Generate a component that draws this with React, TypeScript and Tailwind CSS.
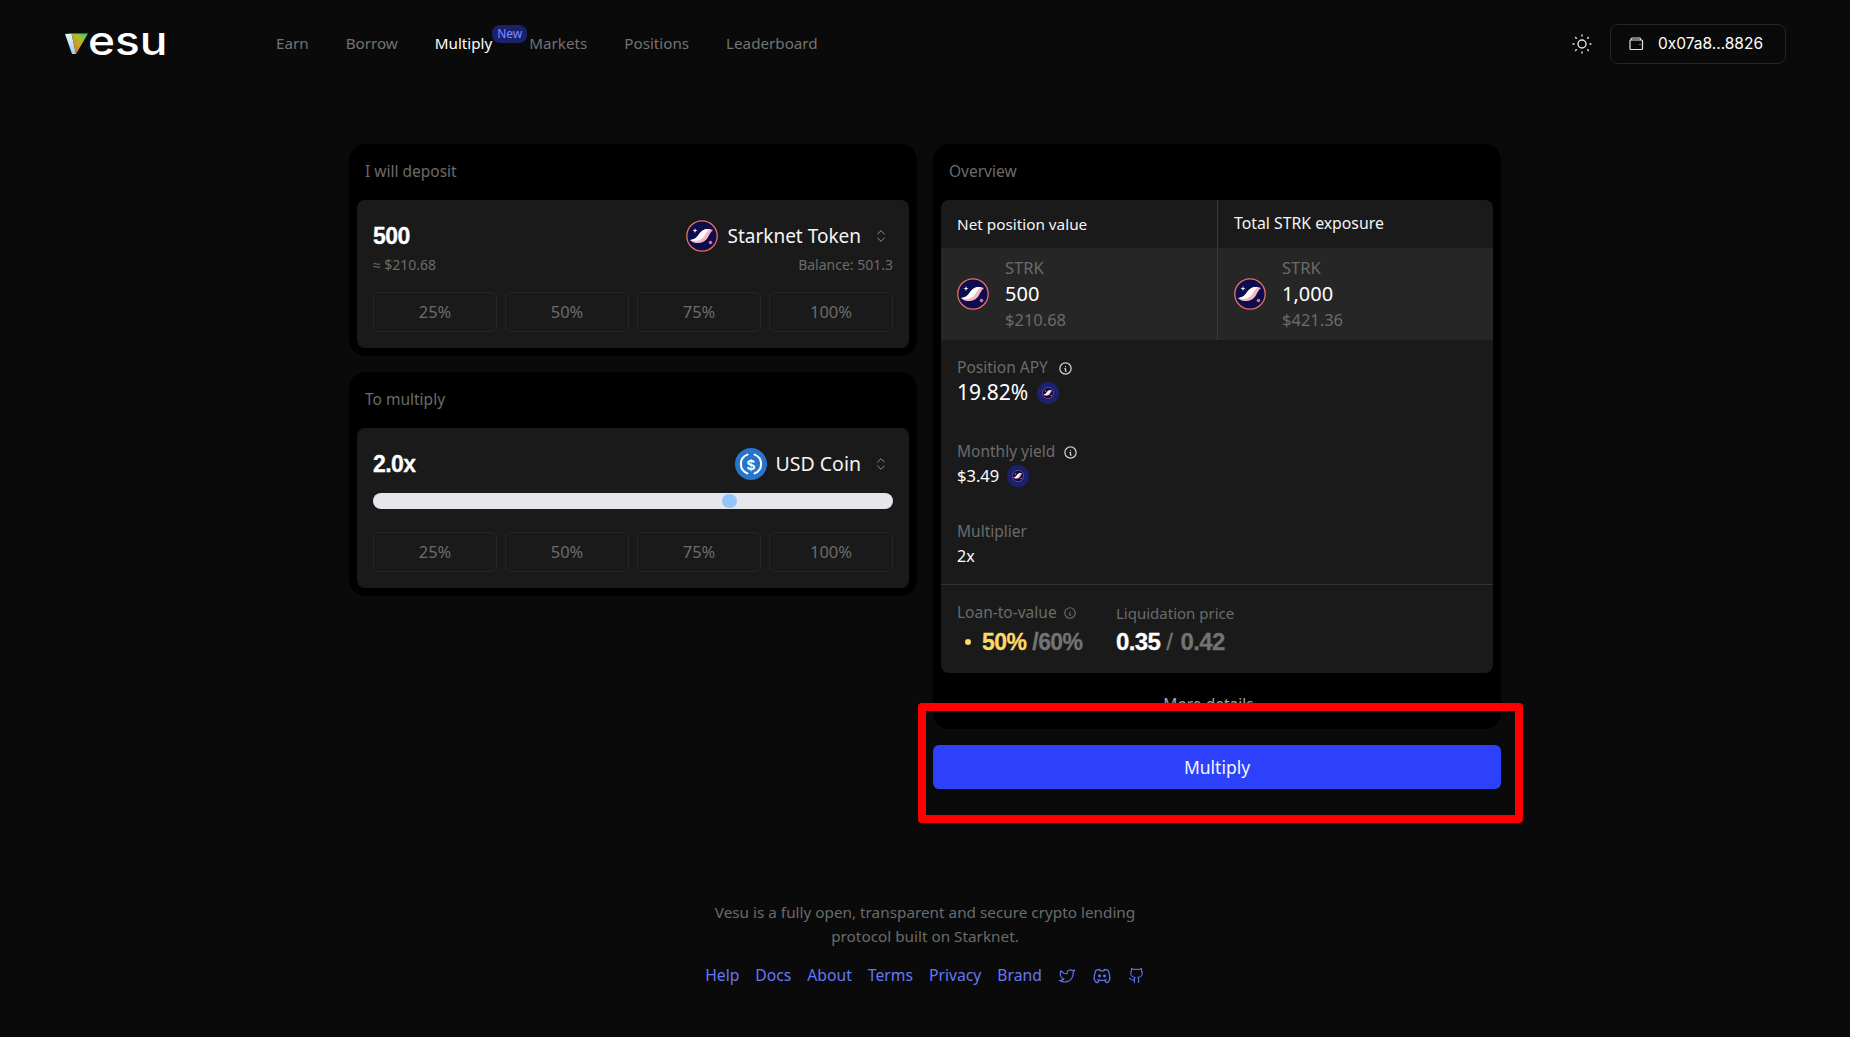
import { ChevronsUpDown, Github } from "lucide-react"
import { TbBrandDiscord, TbBrandTwitter, TbInfoCircle, TbSun } from "react-icons/tb"

const navLinks = ["Earn", "Borrow", "Multiply", "Markets", "Positions", "Leaderboard"]
const footerLinks = ["Help", "Docs", "About", "Terms", "Privacy", "Brand"]
const percents = ["25%", "50%", "75%", "100%"]

const VesuLogo = () => (
    <div className="flex items-center h-10 w-[100px]">
        <svg width="24" height="22" viewBox="0 0 24 22" className="shrink-0">
            <defs>
                <linearGradient id="vesuMain" x1="1" y1="0" x2="0.3" y2="1">
                    <stop offset="0" stopColor="#2fc77a" />
                    <stop offset="0.4" stopColor="#a8c02c" />
                    <stop offset="1" stopColor="#f2761a" />
                </linearGradient>
                <linearGradient id="vesuSide" x1="0" y1="0" x2="0" y2="1">
                    <stop offset="0" stopColor="#e8f6fb" />
                    <stop offset="1" stopColor="#8fd4ee" />
                </linearGradient>
            </defs>
            <path d="M0 1 L6.5 0.5 L11 21 L7 21 Z" fill="url(#vesuSide)" />
            <path d="M6.5 0.5 L23 0.5 L11 21 Z" fill="url(#vesuMain)" />
        </svg>
        <span className="origin-left scale-x-[1.18] font-['Inter',sans-serif] text-[39px] leading-none font-medium text-white -ml-[1px] -mt-[7px]">esu</span>
    </div>
)

const StarknetIcon = ({ size = 32 }: { size?: number }) => (
    <svg width={size} height={size} viewBox="0 0 32 32" className="shrink-0">
        <circle cx="16" cy="16" r="15.2" fill="#0c0c4f" stroke="#e5715f" strokeWidth="1.3" />
        <path d="M4 20 C9 19.5 11 17 13.5 13.5 C16.5 9.5 21 7.5 27 10 C24.5 12 23.5 14.5 21.5 18 C18.5 23 9.5 25.5 4 20 Z" fill="#f7b6c2" />
        <path d="M4 20 C9 19.5 11 17 13.5 13.5 C16.5 9.5 20 8 24.5 9.5 C21 10.5 20 13.5 18 16.5 C15.5 20.5 9 22.5 4 20 Z" fill="#ffffff" />
        <circle cx="24.5" cy="22.5" r="1.8" fill="#ec6f7e" />
        <path d="M9 8 L9.6 10 L11.5 10.6 L9.6 11.2 L9 13 L8.4 11.2 L6.5 10.6 L8.4 10 Z" fill="#ffffff" />
    </svg>
)

const UsdcIcon = () => (
    <svg width="32" height="32" viewBox="0 0 32 32" className="shrink-0">
        <circle cx="16" cy="16" r="16" fill="#2775ca" />
        <path d="M12.5 6.6 A10 10 0 0 0 12.5 25.4" fill="none" stroke="#fff" strokeWidth="2" strokeLinecap="round" />
        <path d="M19.5 6.6 A10 10 0 0 1 19.5 25.4" fill="none" stroke="#fff" strokeWidth="2" strokeLinecap="round" />
        <text x="16" y="21.5" textAnchor="middle" fill="#fff" fontSize="15" fontWeight="700" fontFamily="Liberation Sans, sans-serif">$</text>
    </svg>
)

const WalletIcon = () => (
    <svg width="15" height="14" viewBox="0 0 15 14" fill="none" stroke="#e5e5e5" strokeWidth="1.2">
        <path d="M2 3 L2 2.5 C2 1.6 2.6 1 3.5 1 L11 1 L12 3" />
        <rect x="1" y="3" width="12.5" height="9.5" rx="1" />
        <circle cx="11" cy="7.5" r="0.6" fill="#e5e5e5" stroke="none" />
    </svg>
)

const SmallStrk = () => (
    <span className="flex items-center justify-center w-[22px] h-[22px] rounded-full bg-[#1a2270]">
        <StarknetIcon size={12} />
    </span>
)

const PercentButtons = () => (
    <div className="grid grid-cols-4 gap-2">
        {percents.map((p) => (
            <button key={p} className="h-10 rounded-md border border-[#262626] text-[16.5px] text-[#6b6b6b]">
                {p}
            </button>
        ))}
    </div>
)

const TokenSelect = ({ icon, name, nameClass }: { icon: React.ReactNode; name: string; nameClass: string }) => (
    <div className="flex items-center">
        {icon}
        <span className={`ml-[9px] text-[#f5f5f5] ${nameClass}`}>{name}</span>
        <ChevronsUpDown size={16} strokeWidth={1.3} className="ml-[12px] mr-1 text-[#a3a3a3]" />
    </div>
)

const StatCell = ({ amount, usd, border }: { amount: string; usd: string; border?: boolean }) => (
    <div className={`flex items-center px-4 ${border ? "border-l border-[#3a3a3a]" : ""}`}>
        <StarknetIcon />
        <div className="ml-4 flex flex-col">
            <span className="text-[16.5px] leading-[24px] text-[#6b6b6b]">STRK</span>
            <span className="text-[20px] leading-[28px] text-white">{amount}</span>
            <span className="text-[16.5px] leading-[24px] text-[#6b6b6b]">{usd}</span>
        </div>
    </div>
)

export default function App() {
    return (
        <div className="h-[1037px] overflow-hidden bg-[#0a0a0a] font-['Noto_Sans',sans-serif] text-[15.5px] text-white">
            <header className="flex items-center justify-between pl-[65px] pr-[64px] pt-6">
                <div className="flex items-center">
                    <VesuLogo />
                    <nav className="ml-[111px] -mt-[2px] flex gap-[37px] text-[15.2px]">
                        {navLinks.map((link) => (
                            <a key={link} className={`relative ${link === "Multiply" ? "text-white" : "text-[#737373]"}`}>
                                {link}
                                {link === "Multiply" && (
                                    <span className="absolute -right-[35px] -top-[7px] flex h-[18px] w-[35px] items-center justify-center rounded-lg bg-[#1a2270] text-[12px] text-[#7f8cff]">
                                        New
                                    </span>
                                )}
                            </a>
                        ))}
                    </nav>
                </div>
                <div className="flex items-center gap-4">
                    <TbSun size={24} strokeWidth={1.4} className="text-[#e5e5e5]" />
                    <button className="flex h-10 w-[176px] items-center rounded-lg border border-[#262626] pl-[18px] font-['Inter',sans-serif] text-[15.5px]">
                        <WalletIcon />
                        <span className="ml-[14px]">0x07a8...8826</span>
                    </button>
                </div>
            </header>

            <main className="mt-20 flex justify-center gap-4">
                <div className="flex w-[568px] flex-col gap-4">
                    <section className="rounded-2xl bg-black px-2 pb-2">
                        <h2 className="px-2 h-14 flex items-center text-[#6b6b6b]">I will deposit</h2>
                        <div className="rounded-lg bg-[#1a1a1a] px-4 pt-5 pb-4">
                            <div className="flex items-center justify-between">
                                <span className="font-['Liberation_Sans',sans-serif] text-[23px] leading-8 font-bold tracking-tight [-webkit-text-stroke:0.3px]">500</span>
                                <TokenSelect icon={<StarknetIcon />} name="Starknet Token" nameClass="text-[19px]" />
                            </div>
                            <div className="mt-[1px] mb-[15px] flex justify-between text-[14px] leading-6 text-[#6b6b6b]">
                                <span>≈ $210.68</span>
                                <span>Balance: 501.3</span>
                            </div>
                            <PercentButtons />
                        </div>
                    </section>
                    <section className="rounded-2xl bg-black px-2 pb-2">
                        <h2 className="px-2 h-14 flex items-center text-[#6b6b6b]">To multiply</h2>
                        <div className="rounded-lg bg-[#1a1a1a] px-4 pt-5 pb-4">
                            <div className="flex items-center justify-between">
                                <span className="font-['Liberation_Sans',sans-serif] text-[23px] leading-8 font-bold tracking-tight [-webkit-text-stroke:0.3px]">2.0x</span>
                                <TokenSelect icon={<UsdcIcon />} name="USD Coin" nameClass="text-[19.5px]" />
                            </div>
                            <div className="relative mt-[13px] mb-[23px] h-4 rounded-full bg-[#e5e7eb]">
                                <span className="absolute left-[349px] top-[1px] h-[14px] w-[15px] rounded-full bg-[#93c5fd]" />
                            </div>
                            <PercentButtons />
                        </div>
                    </section>
                </div>

                <div className="relative w-[568px]">
                    <section className="h-[585px] overflow-hidden rounded-2xl bg-black px-2">
                        <h2 className="px-2 h-14 flex items-center text-[#6b6b6b]">Overview</h2>
                        <div className="overflow-hidden rounded-lg bg-[#1a1a1a]">
                            <div className="grid h-12 grid-cols-2 items-center">
                                <span className="px-4 text-[15.3px] text-[#f5f5f5]">Net position value</span>
                                <span className="flex h-full items-center border-l border-[#3a3a3a] px-4 text-[15.8px] text-[#f5f5f5]">Total STRK exposure</span>
                            </div>
                            <div className="grid h-[92px] grid-cols-2 bg-[#262626]">
                                <StatCell amount="500" usd="$210.68" />
                                <StatCell amount="1,000" usd="$421.36" border />
                            </div>
                            <div className="px-4 pt-4 pb-4">
                                <div className="flex h-6 items-center gap-[10px] text-[#6b6b6b]">
                                    Position APY <TbInfoCircle size={15} className="text-[#d4d4d4]" />
                                </div>
                                <div className="mb-[34px] flex h-[26px] items-center gap-[9px] text-[21px]">
                                    19.82% <SmallStrk />
                                </div>
                                <div className="flex h-6 items-center gap-2 text-[#6b6b6b]">
                                    Monthly yield <TbInfoCircle size={15} className="text-[#d4d4d4]" />
                                </div>
                                <div className="mb-8 flex h-6 items-center gap-2 text-[16.5px]">
                                    $3.49 <SmallStrk />
                                </div>
                                <div className="flex h-6 items-center text-[#6b6b6b]">Multiplier</div>
                                <div className="flex h-6 items-center text-[16px]">2x</div>
                            </div>
                            <div className="flex border-t border-[#333333] px-4 pt-4 pb-[14px]">
                                <div className="w-[159px]">
                                    <div className="flex h-6 items-center gap-[6px] text-[#6b6b6b]">
                                        Loan-to-value <TbInfoCircle size={14} />
                                    </div>
                                    <div className="flex h-[34px] items-center pl-2 font-['Liberation_Sans',sans-serif] text-[23px] font-bold tracking-tight [-webkit-text-stroke:0.3px]">
                                        <span className="mr-[11px] h-[6px] w-[6px] rounded-full bg-[#fcd869]" />
                                        <span className="text-[#fcd869]">50%</span>
                                        <span className="ml-[6px] text-[#737373]">/60%</span>
                                    </div>
                                </div>
                                <div>
                                    <div className="flex h-6 items-center text-[15px] text-[#6b6b6b]">Liquidation price</div>
                                    <div className="flex h-[34px] items-center font-['Liberation_Sans',sans-serif] text-[24px] font-bold tracking-tight [-webkit-text-stroke:0.3px]">
                                        <span className="text-white">0.35</span>
                                        <span className="ml-[6px] font-normal text-[#737373]">/</span>
                                        <span className="ml-[8px] text-[#737373]">0.42</span>
                                    </div>
                                </div>
                            </div>
                        </div>
                        <div className="pt-[19px] text-center leading-6 text-[#a3a3a3]">More details ⌄</div>
                    </section>
                    <button className="mt-4 h-11 w-full rounded-md bg-[#2d41fa] text-[17.5px] text-[#f5f5ff]">Multiply</button>
                    <div className="absolute -left-[15px] top-[559px] h-[120px] w-[605px] rounded-sm border-8 border-[#ff0000]" />
                </div>
            </main>

            <footer className="mt-[111px] flex flex-col items-center">
                <p className="w-[440px] text-center text-[15.3px] leading-6 text-[#6b6b6b]">
                    Vesu is a fully open, transparent and secure crypto lending protocol built on Starknet.
                </p>
                <div className="mt-4 flex items-center gap-4 text-[15.7px] text-[#6677f5]">
                    {footerLinks.map((link) => (
                        <a key={link}>{link}</a>
                    ))}
                    <TbBrandTwitter size={18} strokeWidth={1.5} />
                    <TbBrandDiscord size={20} strokeWidth={1.5} />
                    <Github size={17} strokeWidth={1.5} />
                </div>
            </footer>
        </div>
    )
}
